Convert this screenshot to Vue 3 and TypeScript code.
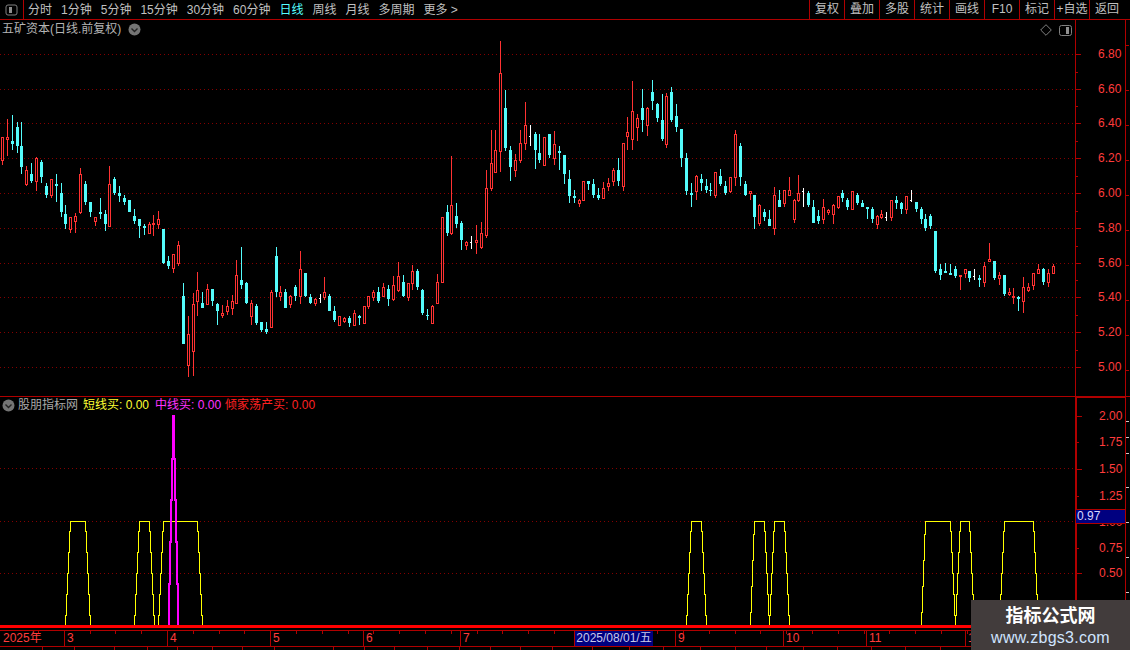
<script setup lang="ts">
interface Body { x: number; y: number; w: number; h: number; cls: string }
interface Wick { x: number; y: number; h: number; cls: string }

const groups: { x0: number; y0: number; rows: string }[] = [
  { x0: 0, y0: 100, rows: `r7 112 112 182 195,r22 57 112 119 168,c37 45 123 132 150,c52 66 81 138 159,c64 66 138 201 222,r79 198 210 255 258,c94 190 222 243 249,r109 171 174 245 273,c124 180 186 231 249,c139 250 258 285 294,r154 237 238 287 294,c169 222 252 258 306,c184 249 279 336 351,c196 315 342 372 387,r211 351 352 389 399,r226 339 348 365 399,r241 204 222 339 342,c256 243 252 306 315,c271 306 306 336 351,r286 351 352 365 378,c301 294 336 342 357,c316 330 342 372 393,r328 198 252 380 381,c343 231 237 279 285,c358 258 279 288 306,c373 285 294 306 315,c388 300 300 336 336,c403 327 348 363 372,c418 357 357 378 414,c433 372 378 384 405,r448 366 372 402 402,r460 345 369 375 408,r475 333 357 375 387,c490 387 387 489 492,c505 468 483 498 507,r520 462 462 507 519,r535 423 435 492 498,c550 549 588 732 732,r565 648 702 798 831,r580 579 612 756 828,r592 516 570 606 648,c607 576 609 624 624,r622 552 567 615 615,c637 567 567 603 618,c652 609 612 633 675,r667 615 639 648 654,r682 600 618 636 645,r697 585 603 627 645,r709 480 525 612 612,c724 441 540 555 567,c739 546 549 609 612,r754 600 609 651 675,c769 612 618 669 675,c784 666 666 690 696,c799 666 687 696 702,r814 570 576 684 684,c829 441 468 576 591,r841 558 576 591 603,c856 567 576 624 624,r871 585 588 615 624,c886 555 561 588 603` },
  { x0: 300, y0: 40, rows: `r1 633 687 772 792,c16 699 699 768 771,c31 762 771 789 792,r46 774 778 792 798,w61 762 775 778 789,r73 711 756 774 780,c88 762 768 813 813,c103 798 813 840 846,r118 828 828 858 858,r133 831 834 846 849,c148 828 834 849 861,r163 810 819 858 858,c178 825 828 834 855,r193 798 798 852 852,r205 768 768 801 807,r220 750 756 774 783,c235 741 756 783 789,r250 729 741 771 771,c265 735 747 777 798,r280 708 735 780 783,r295 666 708 753 756,c310 705 726 768 771,r325 729 729 774 783,r337 675 693 732 750,c352 687 693 741 750,c367 747 750 819 825,c382 807 825 828 840,r397 795 798 852 852,r412 702 726 792 792,r427 531 531 729 729,c442 495 516 579 588,r454 348 495 582 585,c469 489 528 552 564,c484 543 549 600 630,r499 603 606 618 630,w514 588 606 609 627,r529 555 600 609 642,r544 546 579 624 627,r559 390 444 588 594,r574 270 369 447 453,r586 270 330 399 399,r601 3 99 336 396,c616 150 204 324 333,c631 318 330 381 423,r646 342 360 393 411,r661 270 309 363 369,r676 186 255 312 330,w691 255 288 291 318,c706 276 282 330 387,c718 282 339 360 369,r733 291 291 378 378,c748 282 282 345 354,r763 273 312 357 375,c778 318 333 339 390,c793 345 345 402 432,c808 390 417 468 489,c823 450 468 474 489,r838 477 480 492 501,r850 423 423 483 483,c865 423 423 432 450,c880 417 432 465 474,c895 444 465 474 480` },
  { x0: 600, y0: 70, rows: `r10 336 354 387 387,r25 324 339 351 363,r40 294 300 336 348,c55 264 300 333 348,r70 219 219 351 363,r82 141 186 201 240,r97 33 123 210 240,r112 132 144 174 213,c127 57 114 150 186,r142 111 114 168 198,c157 30 66 93 120,c172 99 102 144 156,c187 72 150 207 213,r199 69 78 225 234,c214 51 66 150 156,c229 102 138 171 186,c244 177 177 264 291,c259 249 264 363 375,c274 339 369 375 411,r289 315 318 366 390,c304 312 327 339 363,c319 327 348 360 369,c331 339 360 363 378,r346 306 306 378 384,c361 297 318 342 348,c376 333 348 369 375,r391 321 321 366 369,r406 180 192 324 348,c421 219 228 321 348,c436 333 342 375 378,r451 363 363 372 390,c463 375 375 441 477,r478 402 405 462 468,c493 417 426 441 453,c508 420 447 468 468,r523 351 375 477 495,c538 360 390 411 411,r553 360 360 402 411,r568 321 360 378 378,r583 387 390 450 459,r595 315 369 393 396,w610 354 363 366 411,c625 363 369 405 411,c640 390 411 459 459,c655 420 438 453 462,r670 387 411 450 462,r685 417 420 429 435,r700 402 405 435 462,r715 378 378 414 417,c727 360 369 384 396,c742 384 390 411 420` },
  { x0: 850, y0: 170, rows: `r7 63 63 120 120,c22 69 75 99 105,c37 90 99 111 111,c52 111 111 117 147,c67 111 117 147 159,r82 135 138 165 177,r94 120 132 144 147,w109 126 141 144 153,r124 90 90 144 153,c139 78 90 99 117,c154 96 99 117 132,r169 78 78 120 132,w184 60 90 93 96,c199 96 96 117 126,c214 111 117 147 162,c226 132 147 174 183,c241 132 138 168 177,c256 183 183 303 309,c271 282 297 315 330,c286 279 303 309 309,c301 282 309 315 315,c316 288 297 318 324,r331 315 315 321 360,r346 297 297 312 324,c358 303 303 324 336,w373 297 318 321 330,c388 315 324 330 351,r403 276 288 339 351,r418 219 267 276 276,c433 273 273 324 330,r448 306 315 327 345,c463 315 315 372 378,r478 354 366 375 378,r490 354 378 384 402,c505 378 381 387 423,r520 321 351 396 429,r535 339 351 363 366,r550 309 309 348 360,r565 282 297 312 312,c580 294 297 336 345,r595 297 309 339 351,r610 282 288 312 312` },
]

const bodies: Body[] = []
const wicks: Wick[] = []
for (const g of groups) {
  for (const row of g.rows.split(',')) {
    const kind = row[0]
    const [x3, wt, bt, bb, wb] = row.slice(1).split(' ').map(Number)
    const c = Math.floor(g.x0 + x3 / 3)
    const py = (v: number) => Math.round(g.y0 + v / 3)
    const cls = kind === 'r' ? 'red' : kind === 'c' ? 'cyan' : 'white'
    if (py(bt) > py(wt)) wicks.push({ x: c, y: py(wt), h: py(bt) - py(wt), cls })
    if (py(wb) > py(bb)) wicks.push({ x: c, y: py(bb), h: py(wb) - py(bb), cls })
    const h = Math.max(1, py(bb) - py(bt))
    if (kind === 'r' && h > 1) bodies.push({ x: c - 0.5, y: py(bt) + 0.5, w: 2, h: h - 1, cls: 'hollow' })
    else if (kind === 'w') bodies.push({ x: c - 1, y: py(bt), w: 2, h: 1, cls })
    else bodies.push({ x: c - 1, y: py(bt), w: 3, h, cls })
  }
}

const upperGrid = [54, 89, 123, 158, 193, 228, 263, 297, 332, 367]
const lowerGrid = [468, 521, 573]
const upperLabels = ['6.80', '6.60', '6.40', '6.20', '6.00', '5.80', '5.60', '5.40', '5.20', '5.00']
const upperTicks = upperGrid.map((y, i) => ({ y, text: upperLabels[i] }))
const upperMinor = upperGrid.slice(0, -1).map((y, i) => Math.round((y + upperGrid[i + 1]) / 2))
const lowerTicks = [
  { y: 416, text: '2.00', major: true },
  { y: 442, text: '1.75', major: false },
  { y: 469, text: '1.50', major: true },
  { y: 496, text: '1.25', major: false },
  { y: 522, text: '1.00', major: true },
  { y: 548, text: '0.75', major: false },
  { y: 573, text: '0.50', major: true },
]

// Trapezoid line: climbs from the baseline (625) to the top (521) in n 1px steps per side.
function side(topX: number, n: number, dir: number): [number, number][] {
  const total = 104
  const step = total / n
  const pts: [number, number][] = []
  let y = 521
  let x = topX
  pts.push([x, y])
  y += step / 2
  for (let i = 0; i < n; i++) {
    pts.push([x, Math.round(y)])
    x += dir
    pts.push([x, Math.round(y)])
    y += step
  }
  pts.push([x, 625])
  return pts
}
const traps = [
  [70, 85, 5, 5], [139, 149, 5, 5], [163, 197, 5, 5], [691, 701, 5, 5], [754, 764, 4, 5],
  [774, 784, 5, 5], [925, 950, 4, 5], [960, 969, 5, 5], [1004, 1033, 5, 5],
]
const yellowPath = traps
  .map(([l, r, nl, nr]) => {
    const left = side(l, nl, -1).reverse()
    const right = side(r, nr, 1)
    return 'M' + [...left, ...right].map(([x, y]) => `${x + 0.5} ${y + 0.5}`).join('L')
  })
  .join('')

const magentaPath = 'M169 625V584H170V542H171V500H172V459H173V416H174V459H175V500H176V542H177V584H178V625'

const tabs = ['分时', '1分钟', '5分钟', '15分钟', '30分钟', '60分钟', '日线', '周线', '月线', '多周期', '更多 >']
const actions = ['复权', '叠加', '多股', '统计', '画线', 'F10', '标记', '+自选', '返回']

const timeMarks = [
  { x: 64, text: '3' }, { x: 167, text: '4' }, { x: 270, text: '5' }, { x: 363, text: '6' },
  { x: 460, text: '7' }, { x: 675, text: '9' }, { x: 783, text: '10' }, { x: 866, text: '11' }, { x: 965, text: '1' },
]
const timeTicks = Array.from({ length: 37 }, (_, i) => 38 + i * 25.8).map(Math.round)
const footLines = [42, 74, 114, 147, 177, 212, 242, 274, 333, 364, 394, 427, 459, 490, 520, 552, 592, 629, 663, 700, 735, 766, 803, 837, 871, 905, 940]
const stripUpper = [25, 70, 105, 140, 175, 210, 245, 280, 315, 350]
const stripLower = [24, 40, 56, 90, 125, 160, 195]
</script>

<template>
  <div class="page">
    <header class="toolbar">
      <div class="side-cell">
        <svg width="13" height="12" viewBox="0 0 13 12">
          <rect x="1" y="1" width="11" height="10" rx="2" class="ico-frame" />
          <rect x="4" y="3" width="3" height="6" class="ico-fill" />
        </svg>
      </div>
      <nav class="tabs">
        <span v-for="t in tabs" :key="t" class="tab" :class="{ active: t === '日线' }">{{ t }}</span>
      </nav>
      <div class="actions">
        <span v-for="a in actions" :key="a" class="action">{{ a }}</span>
      </div>
    </header>

    <section class="panel upper">
      <div class="plot">
        <svg class="chart" width="1075" height="376" viewBox="0 20 1075 376">
          <line v-for="y in upperGrid" :key="y" x1="0" x2="1075" :y1="y + 0.5" :y2="y + 0.5" class="grid" />
          <rect v-for="(w, i) in wicks" :key="i" :x="w.x" :y="w.y" width="1" :height="w.h" :class="w.cls" />
          <rect v-for="(b, i) in bodies" :key="'b' + i" :x="b.x" :y="b.y" :width="b.w" :height="b.h" :class="b.cls" />
        </svg>
        <div class="title">
          <span>五矿资本(日线.前复权)</span>
          <svg width="13" height="13" viewBox="0 0 13 13">
            <circle cx="6.5" cy="6.5" r="6" class="dot" />
            <path d="M3.5 5.5L6.5 8.5L9.5 5.5" class="dot-chev" />
          </svg>
        </div>
        <div class="plot-icons">
          <svg width="12" height="12" viewBox="0 0 12 12">
            <path d="M6 .7L11.3 6L6 11.3L.7 6Z" class="ico-frame" />
          </svg>
          <svg width="13" height="11" viewBox="0 0 13 11">
            <rect x=".5" y=".5" width="12" height="10" rx="2" class="ico-frame" />
            <rect x="7" y="2" width="3" height="7" class="ico-fill" />
          </svg>
        </div>
      </div>
      <div class="axis">
        <template v-for="t in upperTicks" :key="t.y">
          <i class="tick major" :style="{ top: t.y - 20 + 'px' }"></i>
          <span class="ylabel" :style="{ top: t.y - 20 + 'px' }">{{ t.text }}</span>
        </template>
        <i v-for="y in upperMinor" :key="y" class="tick" :style="{ top: y - 20 + 'px' }"></i>
      </div>
      <div class="strip">
        <i v-for="y in stripUpper" :key="y" class="smark" :style="{ top: y + 'px' }"></i>
      </div>
    </section>

    <section class="panel lower">
      <div class="plot">
        <svg class="chart" width="1075" height="233" viewBox="0 397 1075 233">
          <line v-for="y in lowerGrid" :key="y" x1="0" x2="1075" :y1="y + 0.5" :y2="y + 0.5" class="grid" />
          <path :d="yellowPath" class="yellow-line" />
          <path :d="magentaPath" class="magenta-line" />
          <rect x="0" y="625" width="1075" height="3" class="thick" />
        </svg>
        <div class="legend">
          <svg width="13" height="13" viewBox="0 0 13 13">
            <circle cx="6.5" cy="6.5" r="6" class="dot" />
            <path d="M3.5 5.5L6.5 8.5L9.5 5.5" class="dot-chev" />
          </svg>
          <span class="l-name">股朋指标网</span>
          <span class="l-yellow">短线买: 0.00</span>
          <span class="l-magenta">中线买: 0.00</span>
          <span class="l-red">倾家荡产买: 0.00</span>
        </div>
      </div>
      <div class="axis thick-axis">
        <template v-for="t in lowerTicks" :key="t.y">
          <i class="tick" :class="{ major: t.major }" :style="{ top: t.y - 397 + 'px' }"></i>
          <span class="ylabel" :style="{ top: t.y - 397 + 'px' }">{{ t.text }}</span>
        </template>
        <span class="value-box">0.97</span>
      </div>
      <div class="strip">
        <i v-for="y in stripLower" :key="y" class="smark pale" :style="{ top: y + 'px' }"></i>
      </div>
    </section>

    <footer class="timeaxis">
      <i v-for="x in timeTicks" :key="x" class="ttick" :style="{ left: x + 'px' }"></i>
      <span class="year">2025年</span>
      <span v-for="m in timeMarks" :key="m.x" class="tlabel" :style="{ left: m.x + 'px' }">{{ m.text }}</span>
      <span class="date-box">2025/08/01/五</span>
    </footer>
    <div class="foot">
      <i v-for="x in footLines" :key="x" class="fline" :style="{ left: x + 'px' }"></i>
    </div>

    <aside class="watermark">
      <strong>指标公式网</strong>
      <span>www.zbgs3.com</span>
    </aside>
  </div>
</template>

<style scoped>
.page {
  position: relative;
  width: 1130px;
  height: 650px;
  overflow: hidden;
  background: #000;
  display: flex;
  flex-direction: column;
  font: 12px/16px "Liberation Sans", "Noto Sans CJK SC", sans-serif;
  color: #c0c0c0;
}
.toolbar {
  height: 20px;
  box-sizing: border-box;
  border-bottom: 1px solid #b00000;
  display: flex;
  align-items: stretch;
  flex: none;
}
.side-cell {
  width: 24px;
  box-sizing: border-box;
  border-right: 1px solid #b00000;
  display: flex;
  align-items: center;
  justify-content: center;
}
.tabs {
  display: flex;
  align-items: center;
  gap: 9px;
  padding-left: 4px;
}
.tab.active {
  color: #55ffff;
}
.actions {
  margin-left: auto;
  margin-right: 6px;
  display: flex;
}
.action {
  width: 35px;
  box-sizing: border-box;
  border-left: 1px solid #b00000;
  text-align: center;
  line-height: 19px;
  white-space: nowrap;
}
.panel {
  display: flex;
  flex: none;
}
.upper {
  height: 377px;
  box-sizing: border-box;
  border-bottom: 1px solid #b00000;
}
.lower {
  height: 233px;
}
.plot {
  position: relative;
  width: 1075px;
  flex: none;
}
.chart {
  display: block;
  shape-rendering: crispEdges;
}
.grid {
  stroke: #840000;
  stroke-width: 1;
  stroke-dasharray: 1 3;
}
.red {
  fill: #ff3232;
}
.cyan {
  fill: #54fcfc;
}
.white {
  fill: #fff;
}
.hollow {
  fill: #000;
  stroke: #ff3232;
  stroke-width: 1;
}
.title {
  position: absolute;
  left: 2px;
  top: 1px;
  display: flex;
  align-items: center;
  gap: 7px;
  color: #b4b4b4;
}
.legend {
  position: absolute;
  left: 2px;
  top: 0;
  display: flex;
  align-items: center;
  height: 16px;
  white-space: pre;
}
.l-name {
  margin-left: 3px;
  color: #a8a8a8;
}
.l-yellow {
  margin-left: 5px;
  color: #ffff33;
}
.l-magenta {
  margin-left: 6px;
  color: #ff33ff;
}
.l-red {
  margin-left: 4px;
  color: #ff2020;
}
.dot {
  fill: #747474;
}
.dot-chev {
  fill: none;
  stroke: #222;
  stroke-width: 1.4;
}
.plot-icons {
  position: absolute;
  right: 3px;
  top: 4px;
  display: flex;
  gap: 7px;
  align-items: center;
}
.ico-frame {
  fill: none;
  stroke: #808080;
}
.ico-fill {
  fill: #909090;
}
.axis {
  position: relative;
  width: 50px;
  box-sizing: border-box;
  border-left: 1px solid #b00000;
  flex: none;
}
.thick-axis {
  border-left-width: 2px;
  border-top: 2px solid #b00000;
  margin-top: -1px;
}
.tick {
  position: absolute;
  left: 0;
  width: 2px;
  height: 1px;
  background: #b00000;
}
.tick.major {
  width: 5px;
}
.ylabel {
  position: absolute;
  left: 22px;
  transform: translateY(-50%);
  color: #ff3c3c;
  font-size: 12px;
  line-height: 14px;
}
.thick-axis .ylabel,
.thick-axis .tick {
  margin-top: -1px;
}
.value-box {
  position: absolute;
  left: -1px;
  right: 0;
  top: 111px;
  height: 15px;
  box-sizing: border-box;
  background: #000080;
  border-top: 1px solid #b00000;
  border-bottom: 1px solid #b00000;
  color: #d8d8ff;
  line-height: 13px;
  padding-left: 1px;
}
.strip {
  position: relative;
  flex: 1;
  border-left: 1px solid #b00000;
}
.smark {
  position: absolute;
  left: 0;
  width: 3px;
  height: 1px;
  background: #b00000;
}
.smark.pale {
  background: #d0c8c8;
}
.timeaxis {
  position: relative;
  height: 17px;
  box-sizing: border-box;
  border-top: 1px solid #b00000;
  border-bottom: 1px solid #b00000;
  flex: none;
  color: #ff3c3c;
  line-height: 15px;
}
.ttick {
  position: absolute;
  top: 0;
  width: 1px;
  height: 3px;
  background: #b00000;
}
.year {
  position: absolute;
  left: 3px;
  top: 0;
}
.tlabel {
  position: absolute;
  top: 0;
  height: 15px;
  padding-left: 2px;
  border-left: 1px solid #b00000;
}
.date-box {
  position: absolute;
  left: 574px;
  top: 0;
  width: 79px;
  height: 15px;
  box-sizing: border-box;
  background: #000080;
  border-left: 1px solid #b00000;
  color: #c8c8e8;
  text-align: center;
  white-space: nowrap;
}
.foot {
  position: relative;
  flex: 1;
}
.fline {
  position: absolute;
  top: 0;
  bottom: 0;
  width: 1px;
  background: #b00000;
}
.yellow-line {
  fill: none;
  stroke: #ffff00;
  stroke-width: 1;
}
.magenta-line {
  fill: none;
  stroke: #ff00ff;
  stroke-width: 2;
}
.thick {
  fill: #ff0000;
}
.watermark {
  position: absolute;
  right: 0;
  bottom: 0;
  width: 159px;
  height: 50px;
  background: #423c3c;
  display: flex;
  flex-direction: column;
  align-items: center;
  justify-content: center;
}
.watermark strong {
  font-size: 18px;
  line-height: 26px;
  color: #fff;
}
.watermark span {
  font-size: 16px;
  line-height: 18px;
  letter-spacing: 0.25px;
  color: #cfe4ff;
}
</style>
